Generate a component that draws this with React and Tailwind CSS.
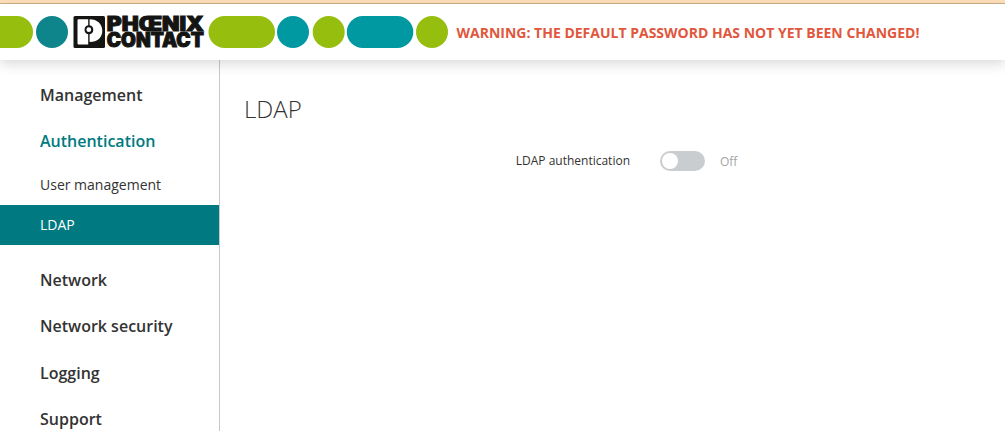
import React, { useState } from "react";

const menu = [
  { name: "Management" },
  { name: "Authentication", items: ["User management", "LDAP"] },
  { name: "Network" },
  { name: "Network security" },
  { name: "Logging" },
  { name: "Support" },
];

const Logo = () => (
  <svg width="448" height="32" viewBox="0 0 448 32" className="shrink-0 overflow-visible">
    <path d="M0 0H17a16 16 0 0 1 0 32H0z" fill="#96be0f" />
    <circle cx="52" cy="16" r="16" fill="#0d858b" />
    <rect x="73.5" y="0" width="31.5" height="32" rx="1.5" fill="#141412" />
    <path
      d="M78.5 3.2H88.2V9.2A4.6 4.6 0 0 0 88.2 18.2V28.5H78.5Q77.5 28.500 77.5 27.5V4.2Q77.5 3.2 78.5 3.2z"
      fill="#fff"
    />
    <path
      d="M89.600 3.2C97.500 3.2 102.300 8 102.300 14.800S97.500 26 89.600 26V18.200A4.600 4.600 0 0 0 89.600 9.200z"
      fill="#fff"
    />
    <circle cx="88.8" cy="13.7" r="2.4" fill="#fff" />
    <g
      fill="#141412"
      stroke="#141412"
      strokeWidth="1"
      fontFamily="Inter, sans-serif"
      fontWeight="900"
      fontSize="19.5"
    >
      <text x="106.800" y="14.5" textLength="97" lengthAdjust="spacingAndGlyphs">
        PHŒNIX
      </text>
      <text x="106.800" y="31.300" textLength="97" lengthAdjust="spacingAndGlyphs">
        CONTACT
      </text>
    </g>
    <rect x="208.5" y="0" width="66.5" height="32" rx="16" fill="#96be0f" />
    <circle cx="293" cy="16" r="16" fill="#0099a1" />
    <circle cx="328.7" cy="16" r="16" fill="#96be0f" />
    <rect x="346.8" y="0" width="66.5" height="32" rx="16" fill="#0099a1" />
    <circle cx="432" cy="16" r="16" fill="#96be0f" />
  </svg>
);

const Header = () => (
  <header className="relative z-10 h-14 shrink-0 flex items-center bg-white shadow-[0_4px_12px_rgba(0,0,0,0.15)]">
    <Logo />
    <p className="ml-[8.5px] pt-0.5 text-[14px] leading-5 font-bold text-[#e1563c] whitespace-nowrap">
      WARNING: THE DEFAULT PASSWORD HAS NOT YET BEEN CHANGED!
    </p>
  </header>
);

const Sidebar = ({ page, setPage }) => (
  <nav className="w-[220px] shrink-0 pt-3 border-r border-[#c8c8c8]">
    {menu.map(({ name, items }) => (
      <div key={name}>
        <button
          className={`flex items-center w-full h-[46.4px] pl-10 text-base font-semibold ${
            items ? "pb-0.5 text-[#007a80]" : "text-[#333333]"
          }`}
        >
          {name}
        </button>
        {items && (
          <ul className="mb-3">
            {items.map((item) => (
              <li
                key={item}
                onClick={() => setPage(item)}
                className={`flex items-center h-10 pl-10 text-sm cursor-pointer ${
                  item === page ? "bg-[#007a80] text-white" : "text-[#333333]"
                }`}
              >
                {item}
              </li>
            ))}
          </ul>
        )}
      </div>
    ))}
  </nav>
);

const Toggle = ({ on, setOn }) => (
  <div className="flex items-center">
    <button
      role="switch"
      aria-checked={on}
      aria-label="LDAP authentication"
      onClick={() => setOn(!on)}
      className={`flex items-center w-[45px] h-5 px-0.5 rounded-full ${
        on ? "justify-end bg-[#007a80]" : "bg-[#cacdd0]"
      }`}
    >
      <span className="size-4 rounded-full bg-white" />
    </button>
    <span className="ml-[15px] pt-0.5 text-xs text-[#a3a6a9]">{on ? "On" : "Off"}</span>
  </div>
);

const App = () => {
  const [page, setPage] = useState("LDAP");
  const [ldap, setLdap] = useState(false);

  return (
    <div className="h-screen flex flex-col overflow-hidden bg-white font-['Open_Sans',sans-serif]">
      <div className="h-1 shrink-0 bg-[#ffdfb9] border-b border-[#ccb187]" />
      <Header />
      <div className="flex flex-1 min-h-0">
        <Sidebar page={page} setPage={setPage} />
        <main className="flex-1 pl-6 pt-[31px]">
          <h1 className="text-2xl leading-9 font-light text-[#333333]">{page}</h1>
          <div className="flex items-center mt-6">
            <span className="w-[386px] mr-[30px] text-right text-xs text-[#333333]">
              LDAP authentication
            </span>
            <Toggle on={ldap} setOn={setLdap} />
          </div>
        </main>
      </div>
    </div>
  );
};

export default App;
